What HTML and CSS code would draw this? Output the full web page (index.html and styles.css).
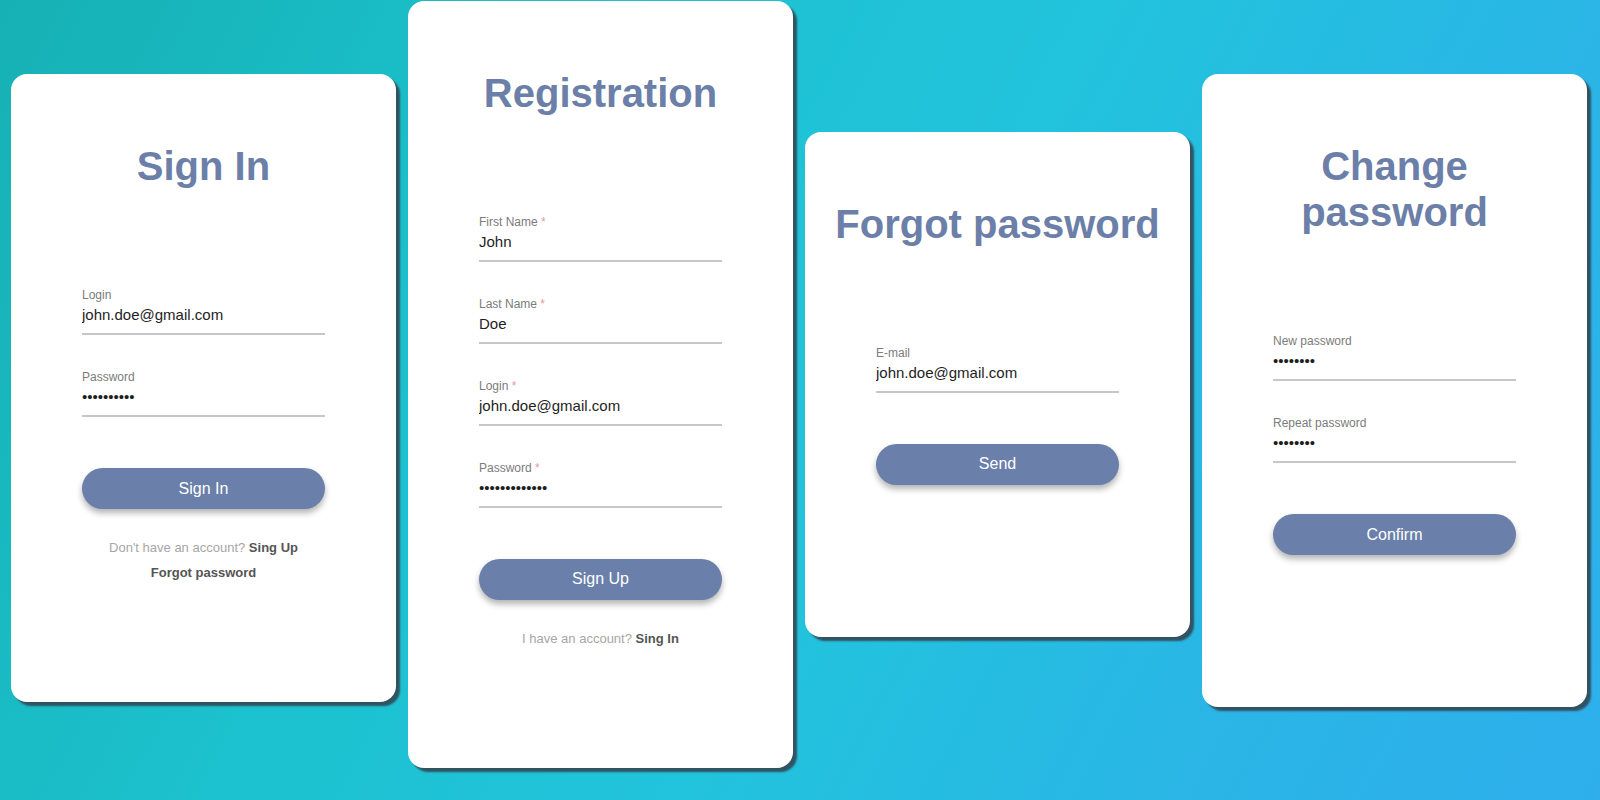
FILE: index.html
```html
<!DOCTYPE html>
<html lang="en">
<head>
<meta charset="utf-8">
<title>Auth forms</title>
<link rel="stylesheet" href="styles.css">
</head>
<body>
<main class="stage">
  <section class="card card--signin">
    <h1 class="title">Sign In</h1>
    <form class="form">
      <label class="field">
        <span class="field-label">Login</span>
        <input class="field-input" type="text" value="john.doe@gmail.com">
      </label>
      <label class="field">
        <span class="field-label">Password</span>
        <input class="field-input" type="password" value="1234567890">
      </label>
      <button class="btn" type="button">Sign In</button>
    </form>
    <div class="links">
      <p class="links-row"><span class="muted">Don't have an account?</span> <a class="link">Sing Up</a></p>
      <p class="links-row"><a class="link">Forgot password</a></p>
    </div>
  </section>

  <section class="card">
    <h1 class="title">Registration</h1>
    <form class="form">
      <label class="field">
        <span class="field-label">First Name <span class="req">*</span></span>
        <input class="field-input" type="text" value="John">
      </label>
      <label class="field">
        <span class="field-label">Last Name <span class="req">*</span></span>
        <input class="field-input" type="text" value="Doe">
      </label>
      <label class="field">
        <span class="field-label">Login <span class="req">*</span></span>
        <input class="field-input" type="text" value="john.doe@gmail.com">
      </label>
      <label class="field">
        <span class="field-label">Password <span class="req">*</span></span>
        <input class="field-input" type="password" value="1234567890123">
      </label>
      <button class="btn" type="button">Sign Up</button>
    </form>
    <div class="links">
      <p class="links-row"><span class="muted">I have an account?</span> <a class="link">Sing In</a></p>
    </div>
  </section>

  <section class="card card--plain">
    <h1 class="title">Forgot password</h1>
    <form class="form">
      <label class="field">
        <span class="field-label">E-mail</span>
        <input class="field-input" type="text" value="john.doe@gmail.com">
      </label>
      <button class="btn" type="button">Send</button>
    </form>
  </section>

  <section class="card card--plain card--change">
    <h1 class="title">Change password</h1>
    <form class="form">
      <label class="field">
        <span class="field-label">New password</span>
        <input class="field-input" type="password" value="12345678">
      </label>
      <label class="field">
        <span class="field-label">Repeat password</span>
        <input class="field-input" type="password" value="12345678">
      </label>
      <button class="btn" type="button">Confirm</button>
    </form>
  </section>
</main>
</body>
</html>
```

FILE: styles.css
```css
* {
  box-sizing: border-box;
}

html, body {
  margin: 0;
  padding: 0;
  width: 1600px;
  height: 800px;
  overflow: hidden;
}

body {
  font-family: "Liberation Sans", Arial, sans-serif;
  background: linear-gradient(118deg, #16b1b4 0%, #1cc2cf 32%, #22c3dd 55%, #2ab5e6 80%, #2eafec 100%);
}

.stage {
  display: flex;
  align-items: center;
  gap: 12px;
  height: 768px;
  padding-left: 11px;
}

.card {
  flex: 0 0 385px;
  width: 385px;
  background: #ffffff;
  border-radius: 16px;
  box-shadow: 4px 4px 2px rgba(50, 72, 84, 0.9);
  padding: 69px 25px 117px;
  display: flex;
  flex-direction: column;
  align-items: center;
}

.card--plain {
  padding-bottom: 152px;
}

.card--signin {
  margin-top: 8px;
}

.card--change {
  margin-top: 13px;
}

.title {
  margin: 0;
  font-size: 40px;
  line-height: 46px;
  font-weight: 700;
  color: #6b7fa8;
  text-align: center;
}

.form {
  width: 243px;
  margin-top: 99px;
  display: flex;
  flex-direction: column;
  gap: 35px;
}

.field {
  display: flex;
  flex-direction: column;
  border-bottom: 2px solid #c6c7cb;
  padding-bottom: 8px;
}

.field-label {
  font-size: 12px;
  line-height: 14px;
  color: #7b7b7b;
  margin-bottom: 3px;
}

.req {
  color: #e39b9b;
}

.field-input {
  display: block;
  width: 100%;
  height: 20px;
  margin: 0;
  padding: 0;
  border: none;
  outline: none;
  background: transparent;
  font-family: "Liberation Sans", Arial, sans-serif;
  font-size: 15px;
  line-height: 20px;
  color: #1e1e1e;
}

.btn {
  margin-top: 16px;
  width: 243px;
  height: 41px;
  border: none;
  border-radius: 21px;
  background: #6a7fa9;
  color: #ffffff;
  font-family: "Liberation Sans", Arial, sans-serif;
  font-size: 16px;
  box-shadow: 0 4px 6px rgba(0, 0, 0, 0.3);
  cursor: pointer;
}

.links {
  margin-top: 26px;
  text-align: center;
  font-size: 13px;
}

.links-row {
  margin: 0;
  line-height: 25px;
}

.muted {
  color: #a6a6a6;
}

.link {
  color: #555555;
  font-weight: 700;
  cursor: pointer;
}
```
